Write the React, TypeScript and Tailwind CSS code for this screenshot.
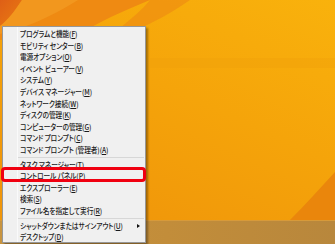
const groups: [string, string, boolean?][][] = [
  [
    ['プログラムと機能', 'F'],
    ['モビリティ センター', 'B'],
    ['電源オプション', 'O'],
    ['イベント ビューアー', 'V'],
    ['システム', 'Y'],
    ['デバイス マネージャー', 'M'],
    ['ネットワーク接続', 'W'],
    ['ディスクの管理', 'K'],
    ['コンピューターの管理', 'G'],
    ['コマンド プロンプト', 'C'],
    ['コマンド プロンプト (管理者)', 'A'],
  ],
  [
    ['タスク マネージャー', 'T'],
    ['コントロール パネル', 'P'],
    ['エクスプローラー', 'E'],
    ['検索', 'S'],
    ['ファイル名を指定して実行', 'R'],
  ],
  [
    ['シャットダウンまたはサインアウト', 'U', true],
    ['デスクトップ', 'D'],
  ],
];

function Wallpaper() {
  return (
    <svg className="absolute inset-0" width="335" height="220" viewBox="0 0 335 220">
      <defs>
        <linearGradient id="base" x1="1" y1="0" x2="0.3" y2="1">
          <stop offset="0" stopColor="#f9b20c" />
          <stop offset="0.5" stopColor="#f5a40a" />
          <stop offset="1" stopColor="#f0960a" />
        </linearGradient>
        <linearGradient id="dark" x1="0" y1="0" x2="1" y2="1">
          <stop offset="0" stopColor="#de5f16" />
          <stop offset="1" stopColor="#ea7c12" />
        </linearGradient>
      </defs>
      <rect width="335" height="220" fill="url(#base)" />
      <path d="M0 0 H150 C120 12 100 22 86 30 L0 40 Z" fill="#ef8a12" />
      <path d="M0 0 H22 C14 12 8 20 0 26 Z" fill="url(#dark)" />
      <path d="M22 0 H78 C58 12 40 22 14 30 L0 34 V26 C8 20 14 12 22 0 Z" fill="#f39a22" opacity="0.8" />
      <path d="M150 0 H190 C170 14 150 24 140 28 L120 28 C132 18 142 10 150 0 Z" fill="#ec8214" opacity="0.5" />
      <rect x="150" y="58" width="185" height="10" fill="#f1a00a" opacity="0.4" />
      <path d="M335 172 V220 H290 C305 205 320 188 335 172 Z" fill="#ea860c" />
    </svg>
  );
}

export default function App() {
  return (
    <div className="relative w-[335px] h-[244px] overflow-hidden flex flex-col font-['Noto_Sans_CJK_JP',sans-serif]">
      <div className="relative flex-1">
        <Wallpaper />
      </div>
      <div className="h-[24px] bg-gradient-to-r from-[#c8943f] via-[#c28d3a] to-[#b8873c] border-t border-[#d79a3a]" />

      <div className="absolute left-[2px] top-[26px] w-[144px] h-[217px] bg-[#f0f0f0] border border-[#979797] shadow-[2px_2px_2px_rgba(0,0,0,0.35)] pt-px">
        <div className="absolute left-[14px] top-0 bottom-0 w-px bg-[#fafafa]" />
        {groups.map((items, gi) => (
          <div key={gi}>
            {gi > 0 && (
              <div className="h-[3px] flex items-center pl-[15px] pr-px">
                <div className="h-px w-full bg-[#d7d7d7]" />
              </div>
            )}
            {items.map(([label, key, sub]) => (
              <div key={label} className="relative h-[11.6px] flex items-center pl-[17px] text-[7.6px] font-medium leading-none tracking-[-0.1px] [font-feature-settings:'palt'] text-[#1a1a1a] whitespace-nowrap">
                <span className="inline-block origin-left scale-x-[0.88]">
                  {label}(<span className="underline underline-offset-[1px]">{key}</span>)
                </span>
                {sub && (
                  <svg className="absolute left-[134px] top-[4px]" width="3" height="4" viewBox="0 0 3 4">
                    <path d="M0 0 L3 2 L0 4 Z" fill="#111" />
                  </svg>
                )}
              </div>
            ))}
          </div>
        ))}
      </div>

      <div className="absolute left-px top-[167px] w-[145px] h-[15px] border-[3px] border-[#f00010] rounded-[4px]" />
    </div>
  );
}
